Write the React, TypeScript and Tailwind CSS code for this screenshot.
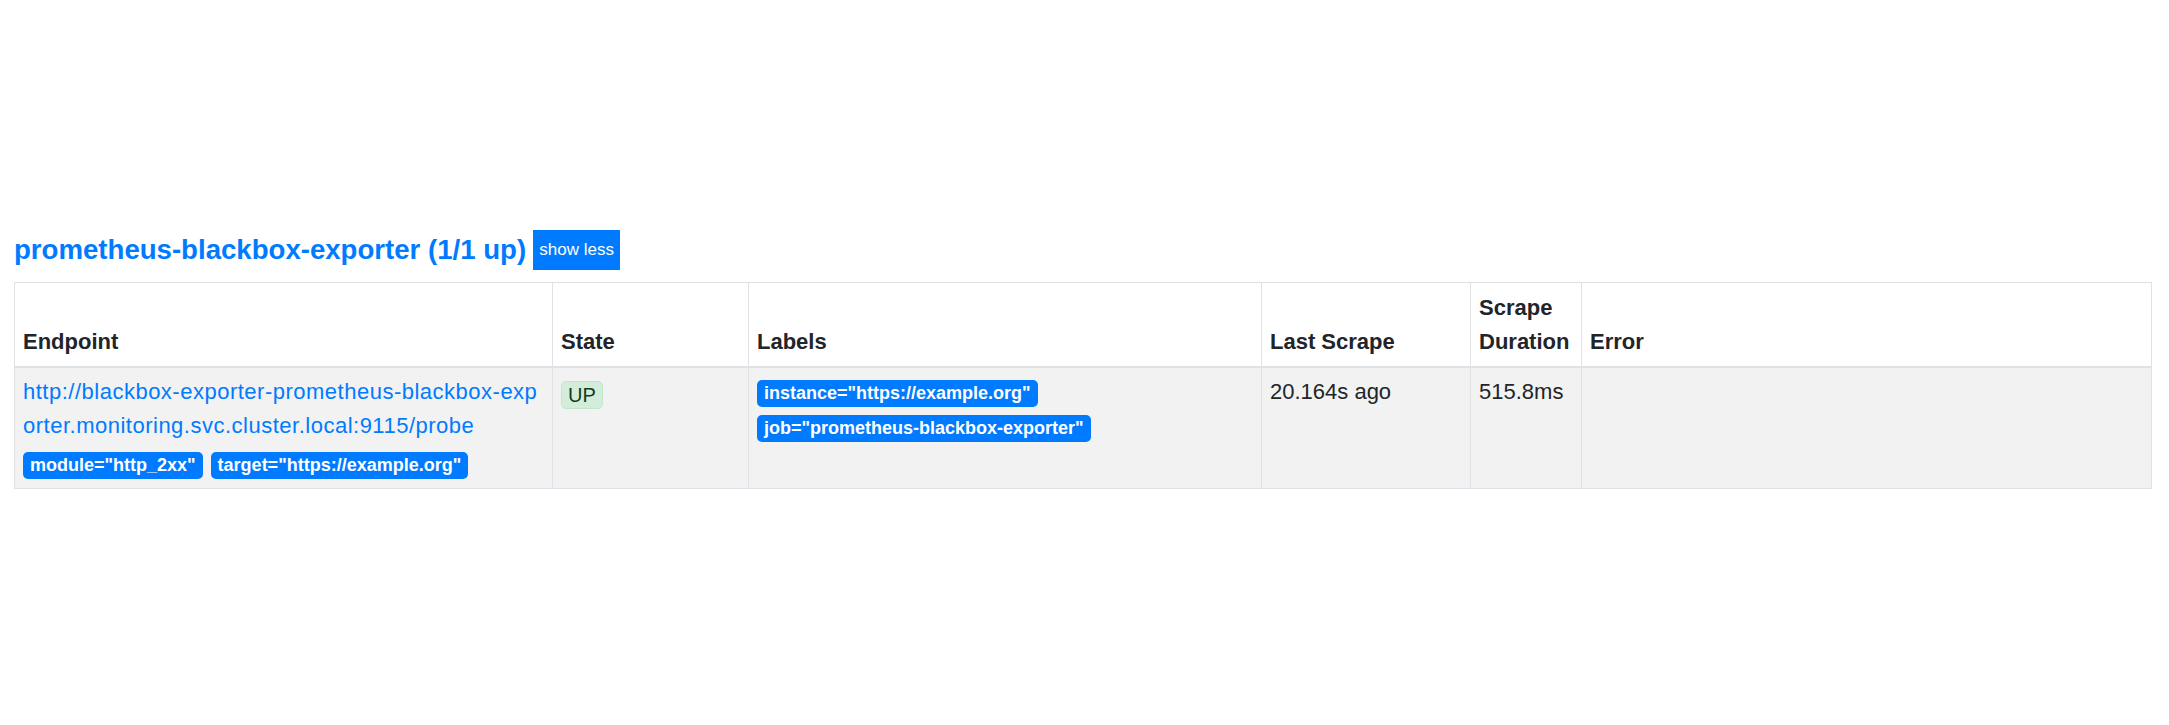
import React from "react";

const Badge = ({ children }: { children: React.ReactNode }) => (
  <span className="inline-block h-[27px] whitespace-nowrap rounded-[5px] bg-[#007bff] px-[7px] text-[18px] font-bold leading-[27px] text-white">
    {children}
  </span>
);

export default function App() {
  return (
    <div className="min-h-[725px] w-[2169px] bg-white pt-[230px] font-['Liberation_Sans',Arial,sans-serif] text-[#212529]">
      <div className="ml-[14px] flex h-[40px] items-center">
        <h3 className="text-[27.6px] font-bold leading-[40px] text-[#007bff]">
          prometheus-blackbox-exporter (1/1 up)
        </h3>
        <button className="ml-[7px] h-[40px] w-[87px] bg-[#007bff] text-[17px] leading-[40px] text-white">
          show less
        </button>
      </div>

      <table className="ml-[14px] mt-[12px] w-[2138px] table-fixed border-collapse border border-[#dee2e6] text-[22px] leading-[34px]">
        <colgroup>
          <col className="w-[538px]" />
          <col className="w-[196px]" />
          <col className="w-[513px]" />
          <col className="w-[209px]" />
          <col className="w-[111px]" />
          <col />
        </colgroup>
        <thead>
          <tr className="bg-white">
            <th className="border border-b-2 border-[#dee2e6] px-[8px] pb-[7px] pt-[8px] text-left align-bottom font-bold">Endpoint</th>
            <th className="border border-b-2 border-[#dee2e6] px-[8px] pb-[7px] pt-[8px] text-left align-bottom font-bold">State</th>
            <th className="border border-b-2 border-[#dee2e6] px-[8px] pb-[7px] pt-[8px] text-left align-bottom font-bold">Labels</th>
            <th className="border border-b-2 border-[#dee2e6] px-[8px] pb-[7px] pt-[8px] text-left align-bottom font-bold">Last Scrape</th>
            <th className="border border-b-2 border-[#dee2e6] px-[8px] pb-[7px] pt-[8px] text-left align-bottom font-bold">Scrape Duration</th>
            <th className="border border-b-2 border-[#dee2e6] px-[8px] pb-[7px] pt-[8px] text-left align-bottom font-bold">Error</th>
          </tr>
        </thead>
        <tbody>
          <tr className="bg-[#f2f2f2]">
            <td className="border border-[#dee2e6] px-[8px] pb-[9px] pt-[7px] align-top">
              <a className="block whitespace-nowrap tracking-[0.5px] text-[#007bff]" href="#">
                http://blackbox-exporter-prometheus-blackbox-exp
                <br />
                orter.monitoring.svc.cluster.local:9115/probe
              </a>
              <div className="mt-[9px] flex gap-[8px]">
                <Badge>module="http_2xx"</Badge>
                <Badge>target="https://example.org"</Badge>
              </div>
            </td>
            <td className="border border-[#dee2e6] px-[8px] pt-[10px] align-top">
              <span className="inline-block h-[28px] rounded-[5px] border border-[#c3e6cb] bg-[#d4edda] px-[6px] text-[20px] leading-[26px] text-[#0f3d1a]">
                UP
              </span>
            </td>
            <td className="border border-[#dee2e6] px-[8px] pt-[12px] align-top">
              <div className="flex flex-col items-start gap-[8px]">
                <Badge>instance="https://example.org"</Badge>
                <Badge>job="prometheus-blackbox-exporter"</Badge>
              </div>
            </td>
            <td className="border border-[#dee2e6] px-[8px] pt-[7px] align-top">20.164s ago</td>
            <td className="border border-[#dee2e6] px-[8px] pt-[7px] align-top">515.8ms</td>
            <td className="border border-[#dee2e6] px-[8px] pt-[7px] align-top"></td>
          </tr>
        </tbody>
      </table>
    </div>
  );
}
